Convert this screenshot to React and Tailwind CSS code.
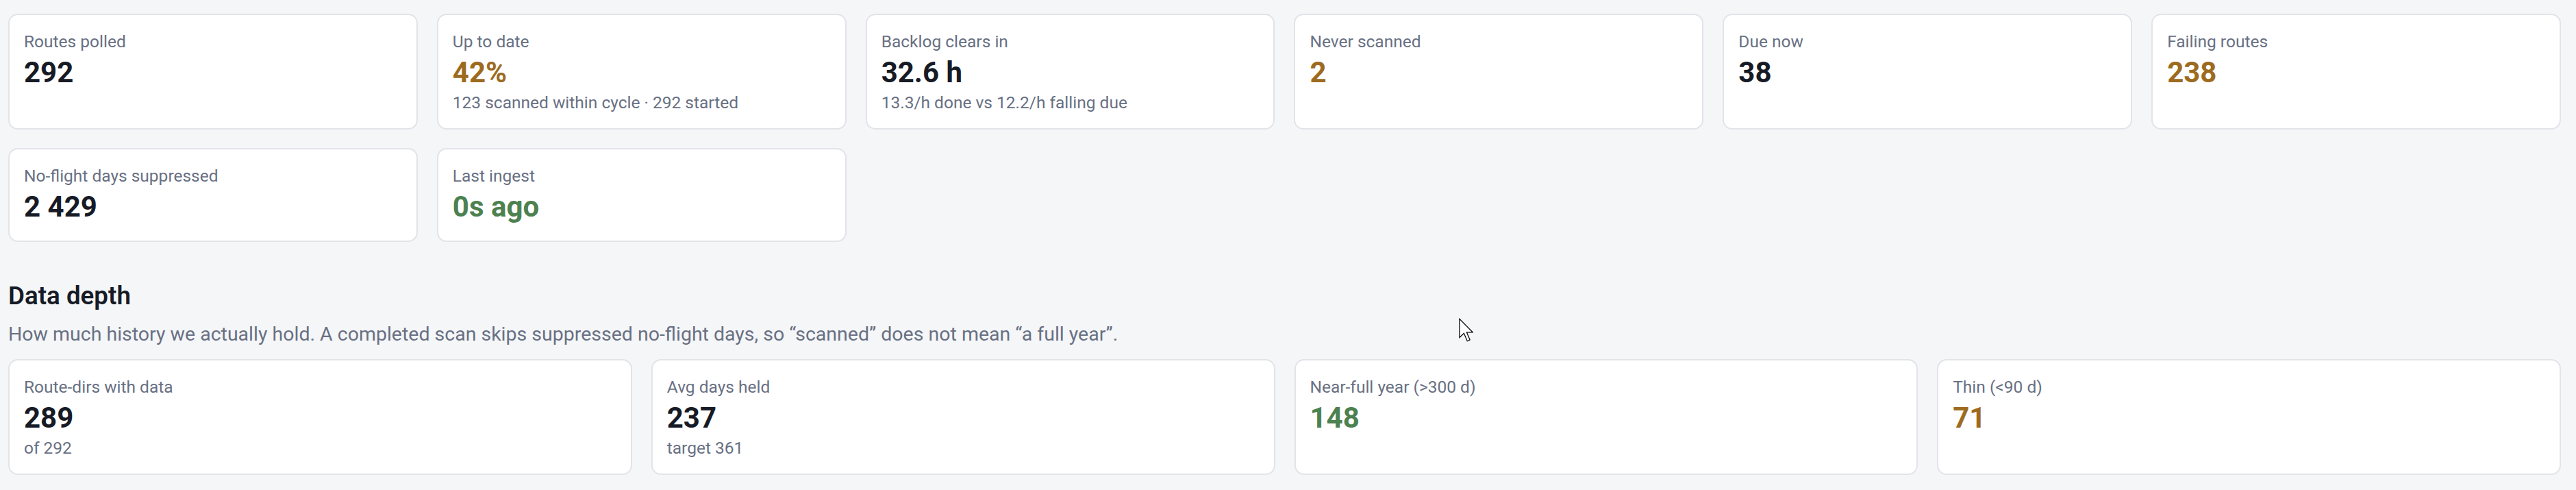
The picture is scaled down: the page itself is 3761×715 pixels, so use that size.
const stats = [
  { label: "Routes polled", value: "292" },
  {
    label: "Up to date",
    value: "42%",
    tone: "warn",
    sub: "123 scanned within cycle · 292 started",
  },
  {
    label: "Backlog clears in",
    value: "32.6 h",
    sub: "13.3/h done vs 12.2/h falling due",
  },
  { label: "Never scanned", value: "2", tone: "warn" },
  { label: "Due now", value: "38" },
  { label: "Failing routes", value: "238", tone: "warn" },
  { label: "No-flight days suppressed", value: "2 429" },
  { label: "Last ingest", value: "0s ago", tone: "good" },
];

const depth = [
  { label: "Route-dirs with data", value: "289", sub: "of 292" },
  { label: "Avg days held", value: "237", sub: "target 361" },
  { label: "Near-full year (>300 d)", value: "148", tone: "good" },
  { label: "Thin (<90 d)", value: "71", tone: "warn" },
];

const toneClass = {
  warn: "text-[#9d6b1f]",
  good: "text-[#4c8150]",
  plain: "text-[#161b26]",
};

const StatCard = ({ label, value, sub, tone = "plain" }) => {
  return (
    <div className="rounded-[14px] border-2 border-[#e2e4ea] bg-white px-[21px] py-[21px]">
      <div className="text-[24.5px] leading-[35px] text-[#687083]">{label}</div>
      <div className={`text-[42px] leading-[56px] font-bold ${toneClass[tone]}`}>
        {value}
      </div>
      {sub && (
        <div className="text-[24.5px] leading-[32px] text-[#687083]">{sub}</div>
      )}
    </div>
  );
};

// mouse pointer left in the capture
const Pointer = () => (
  <svg
    className="absolute left-[2130px] top-[464px]"
    width="21"
    height="36"
    viewBox="0 0 12 20"
  >
    <path
      d="M0.5 0.5 L0.5 16 L4.2 12.4 L7 19 L9.2 18 L6.5 11.6 L11.5 11.6 Z"
      fill="#fff"
      stroke="#000"
      strokeWidth="0.7"
      strokeLinejoin="miter"
    />
  </svg>
);

export default function App() {
  return (
    <div className="relative min-h-screen bg-[#f5f6f8] pt-[20px] pl-[12px] pr-[22px] font-['Roboto','Liberation_Sans',sans-serif]">
      {/* Polling status */}
      <div className="grid grid-cols-6 gap-x-[28px] gap-y-[27px]">
        {stats.map((s) => (
          <StatCard key={s.label} {...s} />
        ))}
      </div>

      {/* Data depth */}
      <div className="mt-[55px]">
        <h2 className="text-[36.75px] leading-[48px] font-semibold text-[#161b26]">
          Data depth
        </h2>
        <p className="mt-[12px] text-[28.5px] leading-[40px] text-[#687083]">
          How much history we actually hold. A completed scan skips suppressed
          no-flight days, so “scanned” does not mean “a full year”.
        </p>
        <div className="mt-[16px] grid grid-cols-4 gap-[28px]">
          {depth.map((s) => (
            <StatCard key={s.label} {...s} />
          ))}
        </div>
      </div>

      <Pointer />
    </div>
  );
}
